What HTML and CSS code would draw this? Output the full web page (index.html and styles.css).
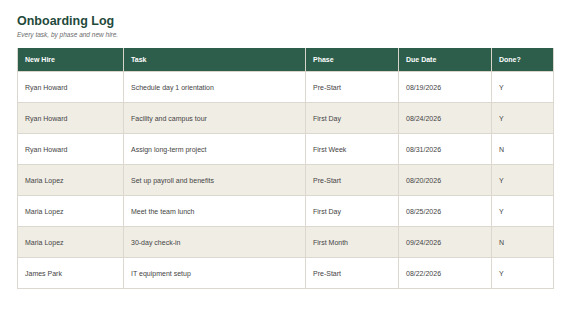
FILE: index.html
```html
<!DOCTYPE html>
<html>
<head>
<meta charset="utf-8">
<link rel="stylesheet" href="styles.css">
</head>
<body>
<div class="page">
  <h1 class="title">Onboarding Log</h1>
  <p class="subtitle">Every task, by phase and new hire.</p>
  <table class="log">
    <colgroup>
      <col class="c1"><col class="c2"><col class="c3"><col class="c4"><col class="c5">
    </colgroup>
    <thead>
      <tr><th>New Hire</th><th>Task</th><th>Phase</th><th>Due Date</th><th>Done?</th></tr>
    </thead>
    <tbody>
      <tr><td>Ryan Howard</td><td>Schedule day 1 orientation</td><td>Pre-Start</td><td>08/19/2026</td><td>Y</td></tr>
      <tr><td>Ryan Howard</td><td>Facility and campus tour</td><td>First Day</td><td>08/24/2026</td><td>Y</td></tr>
      <tr><td>Ryan Howard</td><td>Assign long-term project</td><td>First Week</td><td>08/31/2026</td><td>N</td></tr>
      <tr><td>Maria Lopez</td><td>Set up payroll and benefits</td><td>Pre-Start</td><td>08/20/2026</td><td>Y</td></tr>
      <tr><td>Maria Lopez</td><td>Meet the team lunch</td><td>First Day</td><td>08/25/2026</td><td>Y</td></tr>
      <tr><td>Maria Lopez</td><td>30-day check-in</td><td>First Month</td><td>09/24/2026</td><td>N</td></tr>
      <tr><td>James Park</td><td>IT equipment setup</td><td>Pre-Start</td><td>08/22/2026</td><td>Y</td></tr>
    </tbody>
  </table>
</div>
</body>
</html>
```
FILE: styles.css
```css
html, body {
  margin: 0;
  padding: 0;
  background: #ffffff;
}
body {
  font-family: "Liberation Sans", Arial, sans-serif;
}
.page {
  padding: 14px 17px;
}
.title {
  margin: 0;
  font-size: 12.5px;
  font-weight: 700;
  color: #1f4a3b;
  line-height: 15px;
}
.subtitle {
  margin: 1px 0 9px 0;
  font-size: 6.5px;
  font-style: italic;
  color: #6b6b6b;
  line-height: 9px;
}
.log {
  width: 536px;
  border-collapse: collapse;
  table-layout: fixed;
  font-size: 7px;
}
.c1 { width: 106px; }
.c2 { width: 182px; }
.c3 { width: 93px; }
.c4 { width: 93px; }
.c5 { width: 62px; }
.log th {
  background: #2d5e4c;
  color: #ffffff;
  font-weight: 700;
  text-align: left;
  height: 23px;
  padding: 0 7px;
  border: 1px solid #d8d4ca;
  border-top: none;
}
.log td {
  height: 30px;
  padding: 0 7px;
  color: #444444;
  border: 1px solid #dcd8cf;
}
.log tbody tr:nth-child(even) td {
  background: #f0ede5;
}
```
